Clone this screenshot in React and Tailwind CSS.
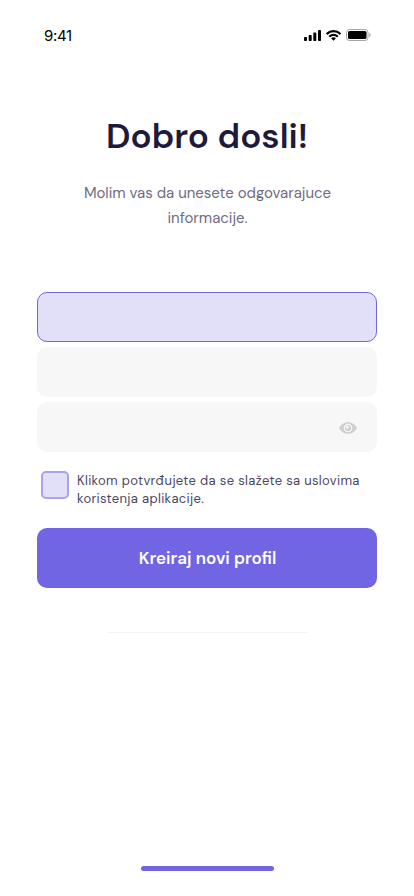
function StatusBar() {
  return (
    <header className="flex h-[70px] items-center justify-between pl-11 pr-[43px]">
      <span className="pt-px font-['Inter',sans-serif] text-[15px] leading-5 tracking-[-0.3px] text-black">9:41</span>
      <div className="flex items-center gap-[5px]">
        <svg width="17" height="11" viewBox="0 0 17 11" fill="#000">
          <rect x="0" y="7" width="3" height="4" rx="0.8" />
          <rect x="4.7" y="5" width="3" height="6" rx="0.8" />
          <rect x="9.3" y="2.6" width="3" height="8.4" rx="0.8" />
          <rect x="14" y="0" width="3" height="11" rx="0.8" />
        </svg>
        <svg width="15" height="11" viewBox="0 0 15.3 11" fill="#000">
          <path d="M7.67 2.28c2.22 0 4.36.85 5.97 2.38.12.12.32.12.44 0l1.16-1.17a.33.33 0 0 0 0-.47 10.97 10.97 0 0 0-15.14 0 .33.33 0 0 0 0 .47l1.16 1.17c.12.12.31.12.44 0a8.66 8.66 0 0 1 5.97-2.38Z" />
          <path d="M7.67 6.08c1.22 0 2.4.45 3.3 1.27.12.12.32.12.44-.01l1.16-1.17a.33.33 0 0 0 0-.48 7.13 7.13 0 0 0-9.79 0 .33.33 0 0 0 0 .48l1.16 1.17c.12.13.32.13.44.01.9-.82 2.07-1.27 3.29-1.27Z" />
          <path d="M9.9 8.64a.32.32 0 0 0-.01-.48 3.41 3.41 0 0 0-4.44 0 .32.32 0 0 0-.01.48l2 2.03c.13.12.33.12.46 0l2-2.03Z" />
        </svg>
        <svg width="25" height="12" viewBox="0 0 25 12">
          <rect x="0.5" y="0.5" width="21.5" height="11" rx="3" fill="none" stroke="#000" strokeOpacity="0.35" />
          <rect x="2" y="2" width="18.5" height="8" rx="1.6" fill="#000" />
          <path d="M23.3 4v4c.8-.3 1.3-1.1 1.3-2s-.5-1.7-1.3-2Z" fill="#000" fillOpacity="0.4" />
        </svg>
      </div>
    </header>
  );
}

function EyeIcon() {
  return (
    <svg width="18" height="12" viewBox="0 0 18 12">
      <path d="M0 6C1.8 2.4 5.1.2 9 .2S16.2 2.4 18 6c-1.8 3.6-5.1 5.8-9 5.8S1.8 9.6 0 6Z" fill="#d0d0d0" />
      <circle cx="9" cy="6" r="3.7" fill="#d0d0d0" stroke="#f7f7f7" strokeWidth="1.2" />
      <circle cx="8.2" cy="4.9" r="1.5" fill="#f7f7f7" />
    </svg>
  );
}

export default function App() {
  return (
    <div className="flex h-[896px] w-[414px] flex-col bg-white font-['DM_Sans','Inter',sans-serif]">
      <StatusBar />
      <main className="flex flex-1 flex-col px-[37px]">
        <h1 className="mt-[42px] whitespace-nowrap text-center text-[35px] font-semibold leading-[48px] text-[#1e1a3c]">
          Dobro dosli!
        </h1>
        <p className="mt-[21px] whitespace-nowrap pl-px text-center text-[15px] leading-[25px] tracking-[-0.02px] text-[#6f6b82]">
          Molim vas da unesete odgovarajuce
          <br />
          informacije.
        </p>
        <div className="mt-[61px] flex flex-col gap-[5px]">
          <div className="h-[50px] rounded-[10px] border border-[#7165e3] bg-[#e2e0f8]" />
          <div className="h-[50px] rounded-[10px] bg-[#f7f7f7]" />
          <div className="flex h-[50px] items-center justify-end rounded-[10px] bg-[#f7f7f7] pr-5 pt-px">
            <EyeIcon />
          </div>
        </div>
        <div className="mt-5 flex pl-1">
          <div className="-mt-px h-7 w-7 shrink-0 rounded-[5px] border-2 border-[#aaa2ee] bg-[#e2e0f8]" />
          <p className="ml-2 whitespace-nowrap text-[13px] leading-[18px] tracking-[0.33px] text-[#4b4763]">
            Klikom potvrđujete da se slažete sa uslovima
            <br />
            koristenja aplikacije.
          </p>
        </div>
        <button className="mt-5 h-[60px] w-full rounded-[10px] bg-[#7165e3] pl-px pt-0.5 text-[17px] font-semibold text-white">
          Kreiraj novi profil
        </button>
        <div className="mx-auto mt-11 h-px w-[201px] bg-[#f4f4f4]" />
      </main>
      <footer className="flex h-[30px] justify-center">
        <div className="h-[5px] w-[133px] rounded-full bg-[#7165e3]" />
      </footer>
    </div>
  );
}
